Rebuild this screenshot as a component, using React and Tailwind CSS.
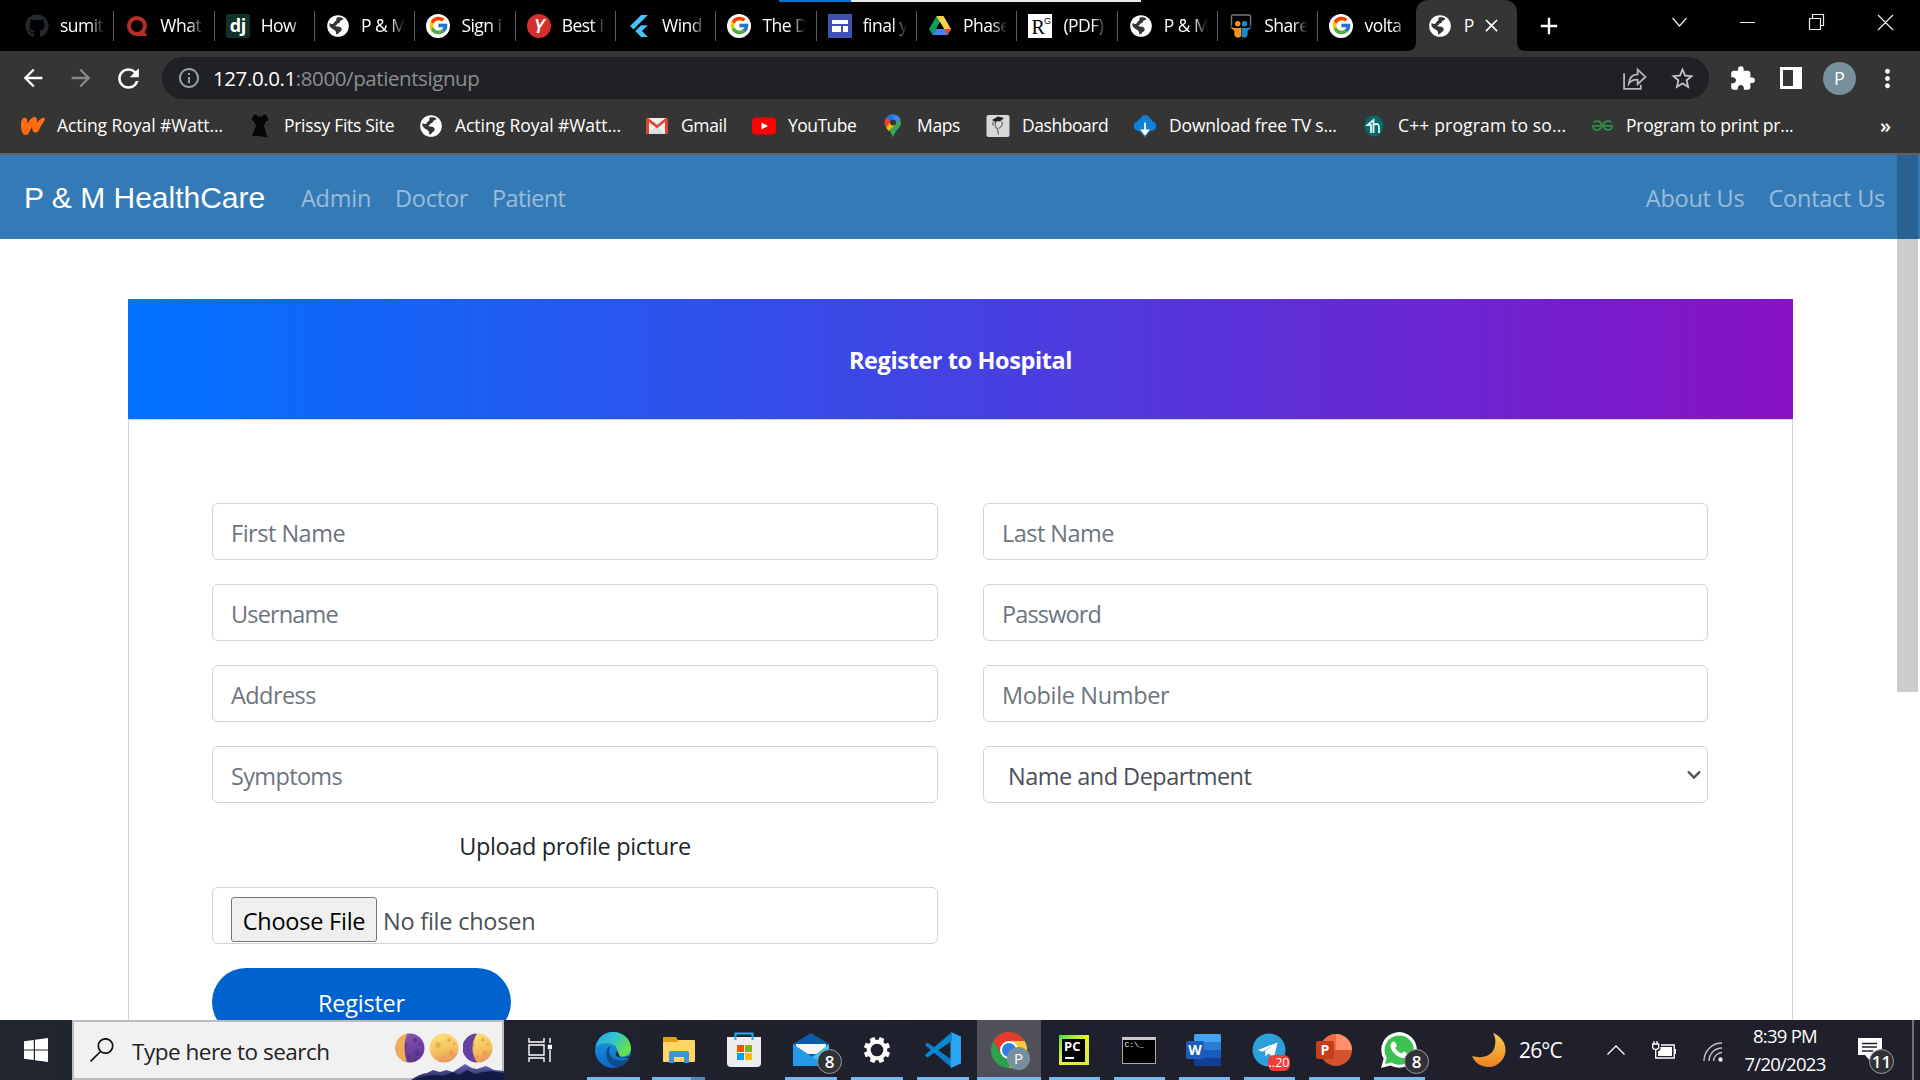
import React from "react";
import { FaGithub } from "react-icons/fa";
import { FcGoogle } from "react-icons/fc";
import { SiFlutter, SiQuora, SiWattpad, SiGeeksforgeeks } from "react-icons/si";
import { MdExtension, MdStarBorder, MdRefresh, MdArrowBack, MdArrowForward, MdInfoOutline, MdClose, MdAdd, MdMoreVert } from "react-icons/md";

/* ---------- small icons ---------- */

const Globe = () => (
  <svg viewBox="0 0 24 24" className="size-6">
    <circle cx="12" cy="12" r="10.8" fill="#fff" />
    <path d="M11 3.6c2.2-.6 4.6-.2 6.300 1-.3 1.500-1.600 2-3 2.100-.3 1.700-1 2.600-2.700 2.600-.2 1.200-1 1.900-2.200 1.900.1 1 .9 1.200 2.300 1.200 2.400.1 3.900 1 4 2.900 0 1.900-1.300 2.300-2.300 3-.6 1.100-1.600 2.100-3.100 2.200-.2-1.600-.2-3.400-1.600-4.200-1.500-.9-3.500-2.200-5.200-4.100-.2-1.200-.1-2.400.3-3.500.7.9 1.700 1.400 2.800 1.200.9-.3 1.200-1.300 2-2 .7-.8 1.700-1.100 1.800-2.100.1-.8-.3-1.300.6-2.200z" fill="#353535" />
  </svg>
);

const Google = () => (
  <span className="flex size-6 items-center justify-center rounded-full bg-white">
    <FcGoogle size={21} />
  </span>
);

const Django = () => (
  <span className="flex size-6 items-center justify-center rounded-[2px] bg-[#113228] pb-0.5 text-lg leading-none font-bold text-white">dj</span>
);

const Yred = () => (
  <span className="flex size-6 items-center justify-center rounded-full bg-[#d32f2f] text-xl leading-none font-semibold text-white italic">Y</span>
);

const Sites = () => (
  <svg viewBox="0 0 24 24" className="size-6">
    <path d="M0 0h24v24H0z" fill="#3f51b5" />
    <path d="M4 6h16v4H4zM4 12h9v6H4zM15 12h5v6h-5z" fill="#fff" />
  </svg>
);

const Drive = () => (
  <svg viewBox="0 0 24 24" className="size-6">
    <path d="M8.500 2h7l-7.400 13L4.600 21 1 15z" fill="#0f9d58" />
    <path d="M8.500 2h7L23 15h-7z" fill="#ffcf48" />
    <path d="M8 15h15l-3.600 6H4.500z" fill="#4285f4" />
    <path d="M16 15h7l-3.600 6z" fill="#ea4335" />
    <path d="M12 8.200 8 15h8z" fill="#000" />
  </svg>
);

const ResearchGate = () => (
  <span className="relative flex size-6 items-end bg-white pl-[3px] font-['Liberation_Serif'] text-[20px] leading-[21px] text-black">
    R<sup className="absolute top-[3px] right-0.5 font-['Liberation_Sans'] text-[9px] leading-none">G</sup>
  </span>
);

const SlideShare = () => (
  <svg viewBox="0 0 24 24" className="size-6">
    <path d="M2.500 12V2.500A1.500 1.500 0 0 1 4 1h16a1.500 1.500 0 0 1 1.500 1.500V12" fill="none" stroke="#777" strokeWidth="1.400" />
    <circle cx="8.700" cy="9.700" r="2.700" fill="#f7941e" />
    <circle cx="15.500" cy="9.700" r="2.700" fill="#1e88c9" />
    <path d="M1 12.500c3 2 7 1.500 11 1.300v8.500c-2 2.500-6 1.500-6.500-1-.4-2 .2-3.400-.5-5C3.500 15.500 2 14.500 1 12.500z" fill="#f7941e" />
    <path d="M23 12.500c-3 2-6.500 1.500-10.500 1.300v8.500c2 2.500 5.500 1.500 6-1 .4-2-.2-3.400.5-5 1.500-.8 3-1.800 4-3.800z" fill="#1e88c9" />
  </svg>
);

const Dress = () => (
  <svg viewBox="0 0 24 24" className="size-6">
    <path d="M5 2l3-2 1.500 2.500h5L16 0l3 2 1.500 4-3 2-1.500 4 3.500 11.500-9-1.500H4L8 12 6.500 8 3.500 5.500z" fill="#050505" />
  </svg>
);

const Gmail = () => (
  <svg viewBox="0 0 24 24" className="size-6">
    <path d="M2 4h20v16H2z" fill="#eee" />
    <path d="M4 20l8-8 8 8z" fill="#ddd" />
    <path d="M1 5.500C1 4 2.500 3.500 3.500 4.200L12 11l8.500-6.800C21.500 3.500 23 4 23 5.500V20h-3V8l-8 6.200L4 8v12H1z" fill="#db4437" />
  </svg>
);

const YouTube = () => (
  <svg viewBox="0 0 24 24" className="size-6">
    <rect y="3.500" width="24" height="17" rx="4" fill="#f00" />
    <path d="M9.500 8.500v7l6.500-3.500z" fill="#fff" />
  </svg>
);

const Pin = () => (
  <svg viewBox="0 0 24 24" className="size-6">
    <path d="M12 0.500a8 8 0 0 1 8 8c0 5.500-5.500 7-8 15-2.500-8-8-9.500-8-15a8 8 0 0 1 8-8z" fill="#34a853" />
    <path d="M5.500 3.700A8 8 0 0 1 14.500.9L8 9z" fill="#1a73e8" />
    <path d="M14.500.9A8 8 0 0 1 19.300 5.200L12 13 9 8z" fill="#4285f4" />
    <path d="M5.500 3.700 9.500 7 9 11l-3.300 3C2.500 10 3.500 5.500 5.500 3.700z" fill="#ea4335" />
    <path d="M9 8l5 3-6.500 6-2-3z" fill="#fbbc04" />
    <circle cx="12" cy="8.500" r="3" fill="#353535" />
  </svg>
);

const Dashboard = () => (
  <svg viewBox="0 0 24 24" className="size-6">
    <rect x=".5" y="1" width="23" height="22" rx="2" fill="#d8d8d8" />
    <path d="M6 6l6-3.500 6 1.500-4 3.500-3-.5-1 1.500z" fill="#222" />
    <path d="M7 8v3.500M9.500 8c-1 3 0 6 1.800 6.500l1.200 6M16 7.500c1 4-1.500 6-3.500 7" fill="none" stroke="#666" strokeWidth="1.200" />
  </svg>
);

const CloudDown = () => (
  <svg viewBox="0 0 24 24" className="size-6">
    <path d="M5.500 17a5 5 0 0 1-1-9.800 3.800 3.800 0 0 1 3-2.500 5 5 0 0 1 9.500 0 3.800 3.800 0 0 1 2.500 2.500A5 5 0 0 1 18.500 17z" fill="#1080d8" />
    <path d="M10.500 8h3v7h4.500L12 22.500 6 15h4.500z" fill="#fff" stroke="#1080d8" strokeWidth="1.200" />
  </svg>
);

const Tutor = () => (
  <svg viewBox="0 0 24 24" className="size-6">
    <ellipse cx="12" cy="12" rx="9.500" ry="10.500" fill="#04696b" />
    <path d="M9 19v-8H5.500l6-5v13M11 11c4-2 6-1 6 2v6" fill="none" stroke="#d9f0ee" strokeWidth="1.900" />
  </svg>
);

/* ---------- browser chrome ---------- */

const tabs = [
  [<FaGithub size={24} color="#24292f" />, "sumit"],
  [<SiQuora size={20} color="#b92b27" />, "What"],
  [<Django />, "How"],
  [<Globe />, "P & M"],
  [<Google />, "Sign i"],
  [<Yred />, "Best I"],
  [<SiFlutter size={22} color="#45c4fa" />, "Wind"],
  [<Google />, "The D"],
  [<Sites />, "final y"],
  [<Drive />, "Phase"],
  [<ResearchGate />, "(PDF)"],
  [<Globe />, "P & M"],
  [<SlideShare />, "Share"],
  [<Google />, "volta"],
];

function TabStrip() {
  return (
    <div className="relative flex h-[51px] bg-black pl-[14px] text-[17.500px] tracking-[-0.03em] text-white">
      <div className="absolute top-0 left-[779px] flex h-0.5 w-[362px]">
        <span className="w-[72px] bg-[#0078d7]" />
        <span className="flex-1 bg-[#e9e9e9]" />
      </div>
      {tabs.map(([icon, label], i) => (
        <div key={i} className="flex w-[100.350px] shrink-0 items-center pl-[11px]">
          <span className="flex w-6 shrink-0 justify-center">{icon}</span>
          <span className="ml-[11px] w-[50px] [mask-image:linear-gradient(to_right,#000_58%,transparent_88%)] whitespace-nowrap">{label}</span>
          <span className={i < 13 ? "ml-auto h-[30px] w-px bg-[#5c5c5c]" : "hidden"} />
        </div>
      ))}
      <svg viewBox="0 0 9 9" className="-ml-[12px] w-[9px] shrink-0 self-end"><path d="M9 0v9H0q9 0 9-9z" fill="#353535" /></svg>
      <div className="flex w-[101px] shrink-0 items-center rounded-t-xl bg-[#353535] pl-3">
        <Globe />
        <span className="ml-3 w-3">P</span>
        <MdClose size={21} className="ml-[5px]" />
      </div>
      <svg viewBox="0 0 9 9" className="w-[9px] shrink-0 self-end"><path d="M0 0v9h9Q0 9 0 0z" fill="#353535" /></svg>
      <MdAdd size={28} className="ml-[9px] self-center" />
      <div className="mr-[26px] ml-auto flex h-[43px] items-center">
        <svg viewBox="0 0 222 22" className="h-[22px] w-[222px]" fill="none" stroke="#eee" strokeWidth="1.200">
          <path d="M.5 7l7 8 7-8M68 11.500h15M137.500 7.500h11v11h-11zM140.500 7.500v-4h11v11h-3M206 4l15 15M221 4l-15 15" />
        </svg>
      </div>
    </div>
  );
}

function AddressRow() {
  return (
    <div className="flex h-[54px] items-center bg-[#353535] text-white">
      <MdArrowBack size={28} className="ml-[19px]" />
      <MdArrowForward size={28} className="ml-5 text-[#898989]" />
      <MdRefresh size={31} className="ml-[18px]" />
      <div className="ml-[18px] flex h-[42px] w-[1547px] items-center rounded-full bg-[#202124]">
        <MdInfoOutline size={24} className="ml-[15px] text-[#9aa0a6]" />
        <span className="ml-3 text-[20.500px] tracking-[-0.02em] text-[#8b8e92]">
          <span className="text-white">127.0.0.1</span>:8000/patientsignup
        </span>
        <svg viewBox="0 0 24 24" className="mr-[22px] ml-auto size-[25px]" fill="none" stroke="#b8b8b8" strokeWidth="1.700">
          <path d="M2 7v15h16v-4" />
          <path d="M6.500 17c.5-6 3-9 8.500-9V3.500l7.500 7-7.500 7v-4.300c-4-.2-6.500 1-8.500 3.800z" />
        </svg>
        <MdStarBorder size={27} className="mr-[13px] text-[#c4c4c4]" />
      </div>
      <MdExtension size={27} className="ml-5" />
      <span className="ml-6 h-[22px] w-[22px] border-[3px] border-r-[9px] border-white" />
      <span className="ml-[21px] flex size-[33px] items-center justify-center rounded-full bg-[#78909c] text-lg">P</span>
      <MdMoreVert size={29} className="ml-[17px]" />
    </div>
  );
}

function Bookmark({ icon, label, className }) {
  return (
    <div className={"flex shrink-0 items-center " + className}>
      <span className="flex w-6 shrink-0 justify-center">{icon}</span>
      <span className="ml-3 whitespace-nowrap">{label}</span>
    </div>
  );
}

function Bookmarks() {
  return (
    <div className="flex h-[50px] items-center border-b-2 border-[#616161] bg-[#353535] pb-[7px] pl-[21px] text-[17.500px] text-white">
      <Bookmark className="w-[227px] tracking-[-0.003em]" icon={<SiWattpad size={24} color="#ff6a12" />} label="Acting Royal #Watt..." />
      <Bookmark className="w-[171px] tracking-[-0.016em]" icon={<Dress />} label="Prissy Fits Site" />
      <Bookmark className="w-[226px] tracking-[-0.003em]" icon={<Globe />} label="Acting Royal #Watt..." />
      <Bookmark className="w-[107px] tracking-[-0.02em]" icon={<Gmail />} label="Gmail" />
      <Bookmark className="w-[129px] tracking-[-0.03em]" icon={<YouTube />} label="YouTube" />
      <Bookmark className="w-[105px] tracking-[-0.02em]" icon={<Pin />} label="Maps" />
      <Bookmark className="w-[147px] tracking-[-0.026em]" icon={<Dashboard />} label="Dashboard" />
      <Bookmark className="w-[229px] tracking-[-0.01em]" icon={<CloudDown />} label="Download free TV s..." />
      <Bookmark className="w-[228px] tracking-[0.009em]" icon={<Tutor />} label="C++ program to so..." />
      <Bookmark className="w-[228px] tracking-[-0.012em]" icon={<SiGeeksforgeeks size={21} color="#2f8d46" />} label="Program to print pr..." />
      <span className="mr-[29px] ml-auto text-xl font-semibold">»</span>
    </div>
  );
}

/* ---------- web page ---------- */

function Field({ label, className }) {
  return (
    <div className={"flex h-[57px] items-center rounded-[6px] border border-[#ced4da] pt-1 pl-[18px] text-[#6c757d] " + className}>{label}</div>
  );
}

function Page() {
  return (
    <main className="relative h-[865px] overflow-hidden bg-white text-[23.500px] tracking-[-0.01em]">
      <nav className="flex h-[84px] items-center bg-[#347ab7] pr-[35px] pl-6 text-white/50">
        <span className="w-[277px] font-['Liberation_Sans'] text-[30px] tracking-normal text-white">P &amp; M HealthCare</span>
        <span className="w-[94px] pt-1">Admin</span>
        <span className="w-[97px] pt-1">Doctor</span>
        <span className="pt-1 tracking-[-0.025em]">Patient</span>
        <span className="ml-auto pt-1">About Us</span>
        <span className="ml-6 pt-1">Contact Us</span>
      </nav>
      <div className="absolute top-0 right-0.5 h-[537px] w-[21px] bg-black/20" />
      <section className="mt-[60px] ml-32 w-[1665px]">
        <h1 className="flex h-[120px] items-center justify-center bg-linear-to-r/srgb from-[#0072ff] to-[#8811c5] pt-1 font-bold tracking-[-0.017em] text-white">Register to Hospital</h1>
        <div className="h-[620px] border border-[#ced4da] px-[83px] pt-[83px]">
          <div className="grid grid-cols-[726px_725px] gap-x-[45px] gap-y-6">
            <Field label="First Name" className="tracking-[-0.021em]" />
            <Field label="Last Name" className="tracking-[-0.023em]" />
            <Field label="Username" className="tracking-[-0.036em]" />
            <Field label="Password" className="tracking-[-0.036em]" />
            <Field label="Address" className="tracking-[-0.024em]" />
            <Field label="Mobile Number" className="tracking-[-0.015em]" />
            <Field label="Symptoms" className="tracking-[-0.028em]" />
            <div className="flex h-[57px] items-center justify-between rounded-[6px] border border-[#ced4da] pt-1 pr-[5px] pl-6 tracking-[-0.022em] text-[#495057]">
              Name and Department
              <svg viewBox="0 0 16 16" className="mb-1 size-4" fill="none" stroke="#495057" strokeWidth="2.400"><path d="M2 4.500l6 6 6-6" /></svg>
            </div>
          </div>
          <div className="flex w-[726px] flex-col">
            <div className="flex h-[84px] items-center justify-center pt-1 tracking-[-0.015em] text-[#212529]">Upload profile picture</div>
            <div className="flex h-[57px] items-start rounded-[6px] border border-[#ced4da] pt-[9px] pl-[18px] text-[#495057]">
              <span className="flex h-[45px] w-[146px] items-center justify-center rounded-[3px] border border-[#767676] bg-[#efefef] pt-1 text-black">Choose File</span>
              <span className="ml-1.5 pt-[7px]">No file chosen</span>
            </div>
            <div className="mt-6 flex h-[68px] w-[299px] items-center justify-center rounded-[34px] bg-[#0062cc] pt-[3px] text-white">Register</div>
          </div>
        </div>
      </section>
    </main>
  );
}

/* ---------- taskbar ---------- */

const Badge = ({ children, className = "" }) => (
  <span className={"absolute flex size-[25px] items-center justify-center rounded-full border border-[#999] bg-[#303238] text-[17px] leading-none font-semibold text-white " + className}>{children}</span>
);

const Edge = () => (
  <svg viewBox="0 0 36 36" className="size-9">
    <defs>
      <linearGradient id="eg" x1="0" y1="0" x2="1" y2=".5"><stop offset="0" stopColor="#2aa7e8" /><stop offset=".5" stopColor="#2fc3cf" /><stop offset="1" stopColor="#66e04a" /></linearGradient>
      <linearGradient id="eb" x1="0" y1="0" x2="0" y2="1"><stop offset="0" stopColor="#1ea3e8" /><stop offset="1" stopColor="#0c65c4" /></linearGradient>
    </defs>
    <circle cx="18" cy="18" r="18" fill="url(#eb)" />
    <path d="M1 15C3 5 10 0 18 0c11 0 18 8 18 16 0 6-4 8.500-9 8.500-4 0-6.500-1.500-6-3 2-3 1-7-3-9C12 10 4 11 1 15z" fill="url(#eg)" />
    <path d="M12 17c-3 8 2 17 11 18.200 5-1.200 9-4.500 11-9-8 4.500-19 2-20-6.500C14 18 14.500 16 16 14c-2 .5-3.300 1.500-4 3z" fill="#114a8b" />
    <path d="M36 23c-3 2.500-7 3-10 2.600-5-.6-6-3-5-4.300.8-1 1-2.500.6-4L25 25l9 1z" fill="#1d2532" />
  </svg>
);

const Explorer = () => (
  <svg viewBox="0 0 32 26" className="h-[26px] w-8">
    <path d="M0 1a1 1 0 0 1 1-1h12l2 3h16v5H0z" fill="#e0a114" />
    <path d="M0 5h14l2-2h15a1 1 0 0 1 1 1v20a1 1 0 0 1-1 1H1a1 1 0 0 1-1-1z" fill="#ffd566" />
    <path d="M6 26V16a2 2 0 0 1 2-2h16a2 2 0 0 1 2 2v10h-5v-6H11v6z" fill="#3d94d9" />
  </svg>
);

const Store = () => (
  <svg viewBox="0 0 36 36" className="size-9">
    <path d="M1 5h34v26a4 4 0 0 1-4 4H5a4 4 0 0 1-4-4z" fill="#eee" />
    <path d="M9.500 8V1.500h17V8" fill="none" stroke="#1bb0f0" strokeWidth="2" />
    <path d="M11 13h7v7h-7z" fill="#f25022" /><path d="M19 13h7v7h-7z" fill="#7fba00" />
    <path d="M11 21h7v7h-7z" fill="#00a4ef" /><path d="M19 21h7v7h-7z" fill="#ffb900" />
  </svg>
);

const Mail = () => (
  <svg viewBox="0 0 36 36" className="size-9">
    <path d="M0 12L18 1l18 11v22H0z" fill="#0b5cab" />
    <path d="M3 12h30v10H3z" fill="#f5f5f5" />
    <path d="M0 12l18 14v8H0z" fill="#1c8fe0" />
    <path d="M36 12v22H16l2-8z" fill="#3cc5fa" />
    <path d="M0 12l33 22H0z" fill="#259be8" />
  </svg>
);

const Gear = () => (
  <svg viewBox="-14 -14 28 28" className="size-7" fill="#fff">
    {[0, 45, 90, 135].map((a) => (
      <rect key={a} x="-2.600" y="-13.200" width="5.200" height="26.400" rx="1" transform={`rotate(${a + 22.5})`} />
    ))}
    <circle r="10.300" />
    <circle r="6.300" fill="#1f202d" />
  </svg>
);

const VsCode = () => (
  <svg viewBox="0 0 36 36" className="size-9">
    <path d="M0 12.500L2.500 10.500 27 28v8L1 14z" fill="#0a7cc9" />
    <path d="M26 0l10 4.500v27L26 36l-.5-10V10z" fill="#2ba5f0" />
    <path d="M0 23.500l2.500 2L27 9V0L1 22z" fill="#0b86d3" />
  </svg>
);

const Chrome = () => (
  <svg viewBox="0 0 36 36" className="size-9">
    <circle cx="18" cy="18" r="18" fill="#2ba24c" />
    <path d="M2.400 9A18 18 0 0 1 33.600 9H18l-8 13z" fill="#e33b2e" />
    <path d="M33.600 9A18 18 0 0 1 18 36l8-14-8-13z" fill="#fcc934" />
    <circle cx="18" cy="18" r="9" fill="#fff" />
    <circle cx="18" cy="18" r="7" fill="#2f7de9" />
  </svg>
);

const PyCharm = () => (
  <span className="flex size-[30px] items-center justify-center bg-linear-to-br from-[#22e04c] via-[#e8f03a] to-[#d9ec36]">
    <span className="flex size-[23px] flex-col bg-black pl-0.5 text-[13px] leading-[14px] font-bold text-white">
      PC
      <span className="mt-1 ml-px h-[2px] w-[9px] bg-white" />
    </span>
  </span>
);

const Terminal = () => (
  <span className="flex h-[27px] w-[34px] flex-col border border-[#aaa] border-t-[3px] border-t-[#c9c9c9] bg-black pl-0.5 font-['Liberation_Mono'] text-[8px] leading-[9px] text-white">C:\_</span>
);

const Word = () => (
  <svg viewBox="0 0 36 32" className="h-8 w-9">
    <rect x="8" width="27" height="32" rx="2" fill="#185abd" />
    <path d="M8 2a2 2 0 0 1 2-2h23a2 2 0 0 1 2 2v6H8z" fill="#41a5ee" />
    <path d="M8 8h27v8H8z" fill="#2b7cd3" /><path d="M8 24h27v6a2 2 0 0 1-2 2H10a2 2 0 0 1-2-2z" fill="#103f91" />
    <rect y="7" width="18" height="18" rx="2" fill="#1b5cbe" />
    <text x="9" y="21" textAnchor="middle" fontFamily="Open Sans" fontWeight="700" fontSize="14" fill="#fff">W</text>
  </svg>
);

const PowerPoint = () => (
  <svg viewBox="0 0 36 32" className="h-8 w-9">
    <circle cx="20" cy="16" r="16" fill="#d35230" />
    <path d="M20 0a16 16 0 0 0-16 16h16z" fill="#ed6c47" /><path d="M20 0a16 16 0 0 1 16 16H20z" fill="#ff8f6b" />
    <rect y="7" width="18" height="18" rx="2" fill="#c43e1c" />
    <text x="9" y="21" textAnchor="middle" fontFamily="Open Sans" fontWeight="700" fontSize="14" fill="#fff">P</text>
  </svg>
);

const Telegram = () => (
  <svg viewBox="0 0 36 36" className="size-9">
    <circle cx="18" cy="18" r="16.500" fill="#2ba0da" />
    <path d="M7 18L26.500 10.500l-3.500 15-5.500-4-3 3-.5-5.500L22 13.500l-10.500 6.200z" fill="#fff" />
  </svg>
);

const WhatsApp = () => (
  <svg viewBox="0 0 36 36" className="size-9">
    <path d="M0 36l2.600-9.300A17.800 17.800 0 1 1 9.500 33.500z" fill="#fff" />
    <path d="M4 32l1.700-6.300A14.600 14.600 0 1 1 10.500 30.500z" fill="#3cc152" />
    <path d="M12.500 9.500c1.500-.3 2 .5 3.200 4 .2.800-1.400 2-1.400 2.500 1.500 2.700 3.200 4.200 6.200 5.400.6.100 1.600-2 2.200-2 1 .2 3.600 1.600 3.800 2 .4 2.800-2.500 4.700-4.600 4.600C16 25.500 9.600 18.500 9.500 14c0-2 1.200-4 3-4.500z" fill="#fff" />
  </svg>
);

function Phase({ base, craters, shadow, shadowColor }) {
  return (
    <svg viewBox="0 0 30 30" className="size-[30px]">
      <defs>
        <linearGradient id="lit" x1=".3" y1="0" x2=".6" y2="1"><stop offset="0" stopColor="#fce07a" /><stop offset=".6" stopColor="#f5c15c" /><stop offset="1" stopColor="#ea9060" /></linearGradient>
        <linearGradient id="dim" x1="0" y1="0" x2=".3" y2="1"><stop offset="0" stopColor="#8a58b8" /><stop offset="1" stopColor="#5f3690" /></linearGradient>
      </defs>
      <circle cx="15" cy="15" r="14.500" fill={base} />
      <g fill={craters} opacity=".6">
        <circle cx="20" cy="7" r="2" /><circle cx="9" cy="12" r="2.800" /><circle cx="22" cy="20" r="2.500" /><circle cx="14" cy="24" r="1.500" /><circle cx="25" cy="11" r="1.300" />
      </g>
      {shadow && <path d={shadow} fill={shadowColor} />}
    </svg>
  );
}

function TaskButton({ children, className, open = true, active }) {
  return (
    <div className={"relative flex h-[60px] shrink-0 items-center justify-center " + (active ? "bg-[#4f505a] " : "") + className}>
      {children}
      {open && <span className="absolute inset-x-0 bottom-0 h-[3px] bg-[#76b9ed]" />}
    </div>
  );
}

function Taskbar() {
  return (
    <footer className="flex h-[60px] items-center overflow-hidden bg-linear-to-r from-[#20252e] via-[#1f202d] to-[#1f202b] text-white">
      <div className="flex w-[72px] shrink-0 justify-center">
        <svg viewBox="0 0 24 24" className="size-6" fill="#fff"><path d="M0 3.300L9.800 2v9.400H0zM11 1.800L24 0v11.400H11zM0 12.600h9.800V22L0 20.700zM11 12.600h13V24l-13-1.800z" /></svg>
      </div>
      <div className="relative flex h-[60px] w-[432px] shrink-0 items-center border-2 border-[#bdbdbd] bg-[#f1f1f1] pl-4 text-[22.500px] tracking-[-0.022em] text-[#222]">
        <svg viewBox="0 0 24 24" className="size-6" fill="none" stroke="#111" strokeWidth="1.700"><circle cx="15.500" cy="8" r="7.200" /><path d="M10.500 13.500L.5 23.500" /></svg>
        <span className="ml-[18px] pt-1 whitespace-nowrap">Type here to search</span>
        <svg viewBox="0 0 93 16" className="absolute right-[-2px] bottom-[-2px] h-4 w-[93px]">
          <defs><linearGradient id="mt" x1="0" y1="0" x2="0" y2="1"><stop offset="0" stopColor="#6f66bd" /><stop offset="1" stopColor="#1a2350" /></linearGradient></defs>
          <path d="M0 16q8-6 16-7l6-3 7 2 6-2 7 2 6-4 6-4 7 4 5 1 9-3 8 4 10 1v9z" fill="url(#mt)" />
          <path d="M4 16q10-5 20-5l8 1 10-4 6 3 8-5 8 4 8-2 8-1 13 2v7z" fill="#101a42" />
        </svg>
        <div className="absolute top-[11px] right-[9px] flex gap-1">
          <Phase base="url(#dim)" craters="#4a2878" shadow="M12 .8A14.500 14.500 0 0 0 12 29.200Q7 15 12 .8z" shadowColor="#efae52" />
          <Phase base="url(#lit)" craters="#d99a3e" />
          <Phase base="url(#lit)" craters="#d99a3e" shadow="M14 .5A14.500 14.500 0 0 0 14 29.500Q5 15 14 .5z" shadowColor="#6b3f9e" />
        </div>
      </div>
      <div className="flex w-[72px] shrink-0 justify-center">
        <svg viewBox="0 0 24 24" className="size-6" fill="none" stroke="#fff" strokeWidth="1.400"><path d="M1 0v4h15V0M1 24v-4h15v4M1 7h15v10H1zM22 0v5M22 12v12" /><path d="M20.500 7.500h3v3h-3z" fill="#fff" /></svg>
      </div>
      <TaskButton className="ml-[11px] w-[53px] pr-0.5"><Edge /></TaskButton>
      <TaskButton className="ml-3 w-[53px]"><Explorer /><span className="absolute right-0 bottom-0 z-10 h-[3px] w-3.5 bg-[#5089b5]" /></TaskButton>
      <TaskButton open={false} className="ml-[13px] w-[53px] pr-0.5"><Store /></TaskButton>
      <TaskButton className="ml-3.5 w-[52px]"><Mail /><Badge className="right-[-5px] bottom-[6px]">8</Badge></TaskButton>
      <TaskButton className="ml-3.5 w-[52px]"><Gear /></TaskButton>
      <TaskButton className="ml-3.5 w-[52px]"><VsCode /></TaskButton>
      <TaskButton active className="ml-2 w-16"><Chrome /><span className="absolute bottom-2.5 left-[30px] flex size-[23px] items-center justify-center rounded-full bg-[#78909c] text-[15px]">P</span></TaskButton>
      <TaskButton className="ml-2 w-[51px] pr-0.5"><PyCharm /></TaskButton>
      <TaskButton className="ml-3.5 w-[51px] pr-0.5"><Terminal /></TaskButton>
      <TaskButton className="ml-3.5 w-[51px] pr-0.5"><Word /></TaskButton>
      <TaskButton className="ml-3.5 w-[51px] pr-0.5"><Telegram /><span className="absolute right-[5px] bottom-[9px] flex h-4 w-[22px] items-center justify-center rounded-[6px] bg-[#f23c34] text-[12.500px] leading-none">..20</span></TaskButton>
      <TaskButton className="ml-3.5 w-[51px] pr-0.5"><PowerPoint /></TaskButton>
      <TaskButton className="ml-3.5 w-[51px] pr-0.5"><WhatsApp /><Badge className="right-[-4px] bottom-[6px]">8</Badge></TaskButton>
      <svg viewBox="0 0 34 34" className="ml-[47px] size-[34px] shrink-0">
        <defs><linearGradient id="mn" x1="0" y1="0" x2="0" y2="1"><stop offset="0" stopColor="#f8cf52" /><stop offset="1" stopColor="#f08021" /></linearGradient></defs>
        <path d="M21 0c8 3 13 10 12.500 18S26 34 16.500 34C9 34 3 30 0 23c10 3 19 0 22-7 2-5.500 2-11-1-16z" fill="url(#mn)" />
      </svg>
      <span className="ml-[13px] w-[43px] pt-0.5 text-[21px] tracking-[-0.04em] whitespace-nowrap">26°C</span>
      <svg viewBox="0 0 18 10" className="ml-[45px] h-2.5 w-[18px]" fill="none" stroke="#fff" strokeWidth="1.300"><path d="M.5 9.500L9 1l8.500 8.500" /></svg>
      <svg viewBox="0 0 24 18" className="ml-[27px] h-[18px] w-6" fill="none" stroke="#fff" strokeWidth="1.300"><path d="M2 0v3M5 0v3M.7 3h6v4q-3 3-6 0zM3.700 9v8h18.500V4H9M23.400 8v5" /><path d="M8.500 6H20v9H6v-4.500q2-1 2.500-2.500z" fill="#fff" stroke="none" /></svg>
      <svg viewBox="0 0 20 20" className="ml-[27px] mt-1 size-5" fill="none" stroke="#e8e8e8" strokeWidth="1.400"><path d="M1 19A18 18 0 0 1 19 1M6 19A13 13 0 0 1 19 6M10.500 19A9 9 0 0 1 19 10.500" opacity=".8" /><circle cx="17.500" cy="17.500" r="1.500" fill="#fff" /></svg>
      <div className="ml-[20px] flex w-[84px] flex-col items-center text-[18.500px] leading-7 tracking-[-0.04em] whitespace-nowrap">
        <span>8:39 PM</span><span>7/20/2023</span>
      </div>
      <div className="relative ml-[31px] h-6 w-6 shrink-0">
        <svg viewBox="0 0 24 24" className="size-6"><path d="M0 0h24v17H13v7l-6-7H0z" fill="#fff" /><path d="M4 5.500h15M4 9h15M4 13h11" stroke="#1f202d" strokeWidth="1.300" /></svg>
        <Badge className="-right-3 -bottom-3">11</Badge>
      </div>
      <span className="mr-1.5 ml-auto h-full w-0.5 bg-[#6f7078]" />
    </footer>
  );
}

export default function App() {
  return (
    <div className="h-[1080px] w-[1920px] overflow-hidden font-['Open_Sans',sans-serif]">
      <TabStrip />
      <AddressRow />
      <Bookmarks />
      <Page />
      <Taskbar />
    </div>
  );
}
